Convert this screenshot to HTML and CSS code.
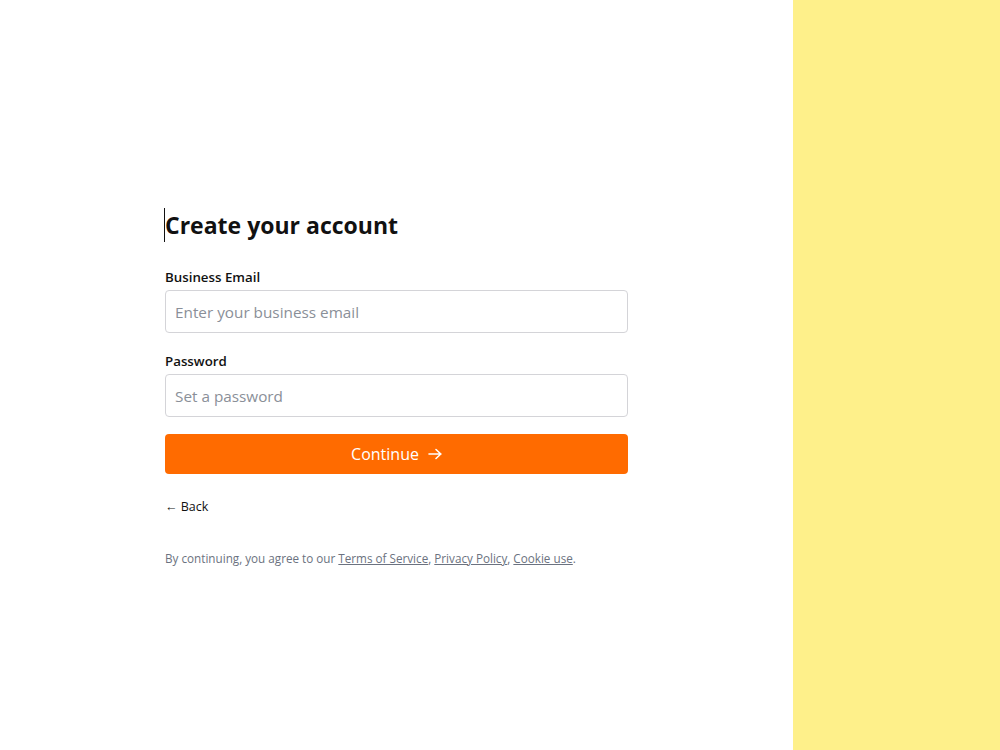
FILE: index.html
```html
<!DOCTYPE html>
<html lang="en">

<head>
  <meta charset="UTF-8">
  <meta name="viewport" content="width=device-width, initial-scale=1.0">
  <link rel="stylesheet" href="styles.css">
</head>

<body>
  <div class="page">
    <main class="left">
      <form class="signup">
        <h1 class="title">Create your account</h1>

        <label for="email">Business Email</label>
        <input type="text" id="email" name="email" placeholder="Enter your business email">

        <label for="password">Password</label>
        <input type="password" id="password" name="password" placeholder="Set a password">

        <button type="submit" class="continue">
          Continue
          <svg class="arrow" width="14" height="12" viewBox="0 0 14 12" fill="none" stroke="white" stroke-width="1.6" stroke-linecap="round" stroke-linejoin="round">
            <path d="M1 6h12M8 1.5l4.8 4.5L8 10.5" />
          </svg>
        </button>

        <a href="#" class="back">&larr; Back</a>

        <p class="legal">
          By continuing, you agree to our <a href="#">Terms of Service</a>, <a href="#">Privacy Policy</a>, <a href="#">Cookie use</a>.
        </p>
      </form>
    </main>
    <aside class="right"></aside>
  </div>
</body>

</html>
```

FILE: styles.css
```css
/* signup page */
body {
  margin: 0;
  padding: 0;
  font-family: "Open Sans", "Noto Sans", sans-serif;
  color: #111;
}

.page {
  display: flex;
  height: 750px;
}

.left {
  width: 793px;
  background-color: white;
  display: flex;
  justify-content: center;
  padding-top: 208px;
  box-sizing: border-box;
}

.right {
  flex: 1;
  background-color: #FEF08A;
}

.signup {
  width: 463px;
  display: flex;
  flex-direction: column;
}

.title {
  margin: 0 0 25px -1px;
  font-size: 23px;
  font-weight: 700;
  line-height: 34px;
  color: #111;
  border-left: 1px solid #111;
}

label {
  font-size: 13.3px;
  font-weight: 600;
  line-height: 20px;
  margin-bottom: 3px;
}

input {
  height: 43px;
  box-sizing: border-box;
  border: 1px solid #d4d4d8;
  border-radius: 4px;
  padding: 0 9px;
  font-family: inherit;
  font-size: 15.3px;
  margin-bottom: 18px;
}

input::placeholder {
  color: #8a8f98;
}

.continue {
  margin-top: -1px;
  height: 40px;
  border: none;
  border-radius: 4px;
  background-color: #FF6B00;
  color: white;
  font-family: inherit;
  font-size: 16px;
  cursor: pointer;
  display: flex;
  align-items: center;
  justify-content: center;
  gap: 9px;
}

.back {
  margin-top: 24px;
  font-size: 12.5px;
  color: #111;
  text-decoration: none;
  align-self: flex-start;
}

.legal {
  margin: 35px 0 0 0;
  font-size: 11.7px;
  color: #6b7280;
}

.legal a {
  color: #6b7280;
}
```
